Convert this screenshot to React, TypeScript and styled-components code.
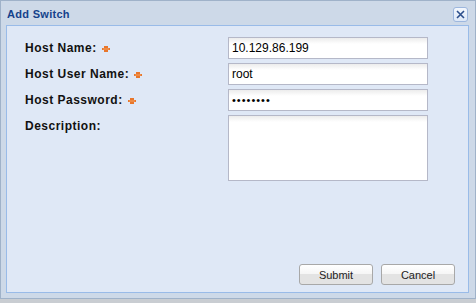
import styled, { createGlobalStyle } from "styled-components"

const GlobalStyle = createGlobalStyle`
  html, body {
    margin: 0;
    padding: 0;
    background: #c9cdd2;
  }
  #root {
    width: 476px;
    height: 303px;
  }
`

type Field = {
  label: string
  value?: string
  required?: boolean
  type?: "text" | "password" | "area"
}

const fields: Field[] = [
  { label: "Host Name:", value: "10.129.86.199", required: true },
  { label: "Host User Name:", value: "root", required: true },
  { label: "Host Password:", value: "12345678", required: true, type: "password" },
  { label: "Description:", type: "area" },
]

const RequiredMark = () => (
  <Mark width="8" height="6" viewBox="0 0 8 6">
    <path d="M2 0h4v2h2v2H6v2H2V4H0V2h2z" fill="#e8762b" />
    <path d="M1 3h6" stroke="#f4a060" strokeWidth="1" />
  </Mark>
)

const CloseIcon = () => (
  <svg width="9" height="9" viewBox="0 0 9 9">
    <path d="M1 1l7 7M8 1L1 8" stroke="#2c4f8c" strokeWidth="1.6" />
  </svg>
)

export default function App() {
  return (
    <>
      <GlobalStyle />
      <Window>
        <Header>
          <Title>Add Switch</Title>
          <CloseTool>
            <CloseIcon />
          </CloseTool>
        </Header>
        <Body>
          <Form>
            {fields.map((f) => (
              <Row key={f.label}>
                <Label>
                  {f.label}
                  {f.required && <RequiredMark />}
                </Label>
                {f.type === "area" ? (
                  <TextArea />
                ) : (
                  <Input
                    type={f.type === "password" ? "password" : "text"}
                    defaultValue={f.value}
                  />
                )}
              </Row>
            ))}
          </Form>
          <Buttons>
            <Button>Submit</Button>
            <Button>Cancel</Button>
          </Buttons>
        </Body>
      </Window>
    </>
  )
}

const Window = styled.div`
  box-sizing: border-box;
  width: 476px;
  height: 299px;
  display: flex;
  flex-direction: column;
  background: #cdd9e8;
  border: 1px solid #9fb2c9;
  padding: 0 6px 5px 5px;
  font-family: "Liberation Sans", Arial, sans-serif;
`

const Header = styled.div`
  height: 24px;
  display: flex;
  align-items: center;
  justify-content: space-between;
  padding-left: 1px;
`

const Title = styled.div`
  font-size: 11px;
  font-weight: bold;
  letter-spacing: 0.3px;
  color: #15428b;
  margin-top: 1px;
`

const CloseTool = styled.div`
  box-sizing: border-box;
  width: 15px;
  height: 15px;
  margin-top: 2px;
  margin-right: 1px;
  display: flex;
  align-items: center;
  justify-content: center;
  border: 1px solid #9db7de;
  border-radius: 3px;
  background: linear-gradient(#f3f7fd, #dde8f7);
`

const Body = styled.div`
  flex: 1;
  display: flex;
  flex-direction: column;
  justify-content: space-between;
  background: #dfe8f6;
  border: 1px solid #99bbe8;
  padding: 11px 13px 7px 18px;
`

const Form = styled.div`
  display: flex;
  flex-direction: column;
  gap: 4px;
`

const Row = styled.div`
  display: grid;
  grid-template-columns: 203px 200px;
  align-items: start;
`

const Label = styled.label`
  height: 22px;
  display: flex;
  align-items: center;
  gap: 5px;
  font-size: 12px;
  font-weight: bold;
  letter-spacing: 0.5px;
  color: #111;
`

const Mark = styled.svg`
  margin-top: 1px;
`

const fieldBox = `
  box-sizing: border-box;
  width: 200px;
  margin: 0;
  border: 1px solid #b5b8c8;
  background: linear-gradient(#ececec, #ffffff 6px, #ffffff);
  font-family: "Liberation Sans", Arial, sans-serif;
  font-size: 12px;
  color: #000;
  outline: none;
`

const Input = styled.input`
  ${fieldBox}
  height: 22px;
  padding: 0 3px;

  &[type="password"] {
    font-size: 11px;
    letter-spacing: 1px;
  }
`

const TextArea = styled.textarea`
  ${fieldBox}
  height: 66px;
  resize: none;
  padding: 2px 3px;
  display: block;
`

const Buttons = styled.div`
  display: flex;
  justify-content: flex-end;
  gap: 8px;
`

const Button = styled.button`
  box-sizing: border-box;
  width: 74px;
  height: 21px;
  padding: 0;
  border: 1px solid #a8a8a8;
  border-radius: 3px;
  background: linear-gradient(#ffffff 0%, #f6f6f6 45%, #e3e3e3 50%, #e3e3e3 100%);
  font-family: "Liberation Sans", Arial, sans-serif;
  font-size: 11px;
  color: #222;
`
